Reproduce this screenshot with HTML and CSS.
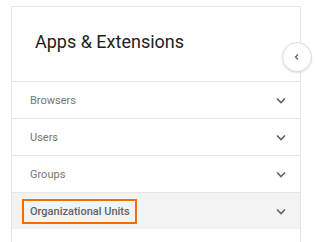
FILE: index.html
```html
<!DOCTYPE html>
<html>
<head>
  <meta charset="UTF-8">
  <title>Apps &amp; Extensions</title>
  <link rel="stylesheet" href="styles.css">
</head>
<body>

<div class="panel">
  <div class="panel-header">
    <h1 class="title">Apps &amp; Extensions</h1>
    <button class="collapse-btn" aria-label="Collapse">
      <svg width="10" height="10" viewBox="0 0 10 10"><path d="M6 2.5 L3.5 5 L6 7.5" fill="none" stroke="#5f6368" stroke-width="1.3"/></svg>
    </button>
  </div>

  <div class="row">
    <span class="row-label">Browsers</span>
    <svg class="chevron" width="10" height="7" viewBox="0 0 10 7"><path d="M1 1.5 L5 5.5 L9 1.5" fill="none" stroke="#5f6368" stroke-width="1.6"/></svg>
  </div>
  <div class="row">
    <span class="row-label">Users</span>
    <svg class="chevron" width="10" height="7" viewBox="0 0 10 7"><path d="M1 1.5 L5 5.5 L9 1.5" fill="none" stroke="#5f6368" stroke-width="1.6"/></svg>
  </div>
  <div class="row">
    <span class="row-label">Groups</span>
    <svg class="chevron" width="10" height="7" viewBox="0 0 10 7"><path d="M1 1.5 L5 5.5 L9 1.5" fill="none" stroke="#5f6368" stroke-width="1.6"/></svg>
  </div>
  <div class="row row-active">
    <span class="row-label highlight">Organizational Units</span>
    <svg class="chevron" width="10" height="7" viewBox="0 0 10 7"><path d="M1 1.5 L5 5.5 L9 1.5" fill="none" stroke="#5f6368" stroke-width="1.6"/></svg>
  </div>
  <div class="panel-rest"></div>
</div>

</body>
</html>
```

FILE: styles.css
```css
body {
  margin: 0;
  background: #fff;
  font-family: Roboto, "Liberation Sans", sans-serif;
  overflow: hidden;
}

.panel {
  margin: 6px 0 0 11px;
  width: 290px;
  box-sizing: border-box;
  border: 1px solid #e6e6e6;
  border-bottom: none;
}

.panel-header {
  position: relative;
  height: 74px;
  display: flex;
  align-items: center;
  padding-left: 23px;
  border-bottom: 1px solid #e6e6e6;
}

.title {
  margin: 0 0 6px 0;
  font-size: 18px;
  font-weight: 400;
  color: #202124;
}

.collapse-btn {
  position: absolute;
  right: -12px;
  top: 35px;
  width: 30px;
  height: 30px;
  border-radius: 50%;
  border: 1px solid #dadce0;
  background: #fff;
  box-shadow: 0 1px 2px rgba(0, 0, 0, 0.12);
  padding: 0;
  display: flex;
  align-items: center;
  justify-content: center;
}

.row {
  height: 36px;
  display: flex;
  align-items: center;
  justify-content: space-between;
  padding: 0 14px 0 18px;
  border-bottom: 1px solid #e6e6e6;
}

.row-label {
  font-size: 11px;
  color: #757575;
}

.row-active {
  background: #f3f3f3;
  border-bottom: none;
}

.highlight {
  color: #5f6368;
  font-weight: 500;
  margin-left: -8px;
  padding: 4px 5px 4px 6px;
  border: 2px solid #e8710a;
}

.panel-rest {
  height: 30px;
}
```
